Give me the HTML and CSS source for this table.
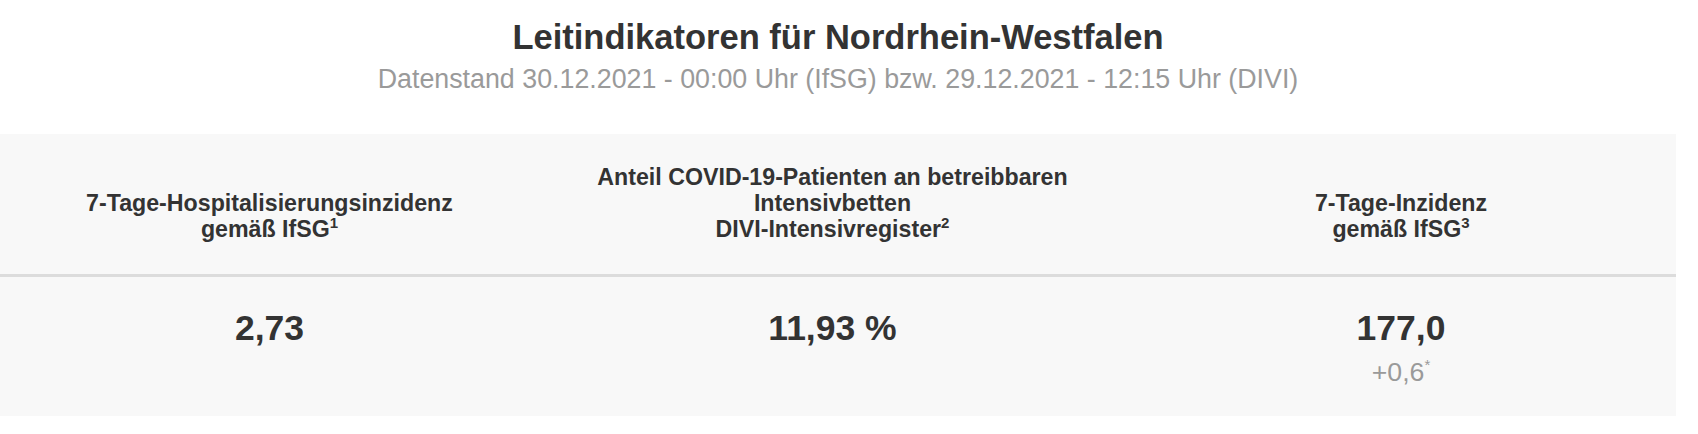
FILE: index.html
```html
<!DOCTYPE html>
<html lang="de">
<head>
<meta charset="utf-8">
<title>Leitindikatoren für Nordrhein-Westfalen</title>
<link rel="stylesheet" href="styles.css">
</head>
<body>
<main class="page">
  <header class="intro">
    <h1 class="title">Leitindikatoren für Nordrhein-Westfalen</h1>
    <p class="subtitle">Datenstand 30.12.2021 - 00:00 Uhr (IfSG) bzw. 29.12.2021 - 12:15 Uhr (DIVI)</p>
  </header>
  <section class="table">
    <div class="row head-row">
      <div class="cell head">7-Tage-Hospitalisierungsinzidenz<br>gemäß IfSG<sup>1</sup></div>
      <div class="cell head">Anteil COVID-19-Patienten an betreibbaren<br>Intensivbetten<br>DIVI-Intensivregister<sup>2</sup></div>
      <div class="cell head">7-Tage-Inzidenz<br>gemäß IfSG<sup>3</sup></div>
    </div>
    <div class="row body-row">
      <div class="cell value"><span class="num">2,73</span></div>
      <div class="cell value"><span class="num">11,93 %</span></div>
      <div class="cell value"><span class="num">177,0</span><span class="delta">+0,6<sup>*</sup></span></div>
    </div>
  </section>
</main>
</body>
</html>
```

FILE: styles.css
```css
html, body {
  margin: 0;
  padding: 0;
  background: #ffffff;
}

body {
  font-family: "Liberation Sans", Arial, Helvetica, sans-serif;
  color: #333333;
}

.page {
  width: 1676px;
}

.intro {
  text-align: center;
  padding-top: 17px;
  margin-bottom: 39px;
}

.title {
  margin: 0;
  font-size: 34.5px;
  line-height: 40px;
  font-weight: bold;
  color: #333333;
}

.subtitle {
  margin: 6px 0 0;
  font-size: 26.8px;
  line-height: 32px;
  color: #9a9a9a;
}

.table {
  background: #f8f8f8;
}

.row {
  display: grid;
  grid-template-columns: 539px 587px 1fr;
}

.head-row {
  height: 143px;
  box-sizing: border-box;
  align-items: end;
  border-bottom: 3px solid #dcdcdc;
}

.cell {
  text-align: center;
}

.head {
  font-size: 23.2px;
  line-height: 26px;
  font-weight: bold;
  padding-bottom: 32px;
}

.head sup {
  font-size: 15px;
  line-height: 0;
  vertical-align: 9px;
}

.body-row {
  height: 139px;
  align-items: start;
}

.value {
  display: flex;
  flex-direction: column;
  align-items: center;
  padding-top: 30px;
}

.num {
  font-size: 35.5px;
  line-height: 42px;
  font-weight: bold;
}

.delta {
  margin-top: 7px;
  font-size: 26.7px;
  line-height: 32px;
  color: #9a9a9a;
}

.delta sup {
  font-size: 15px;
  line-height: 0;
  vertical-align: 11px;
}
```
